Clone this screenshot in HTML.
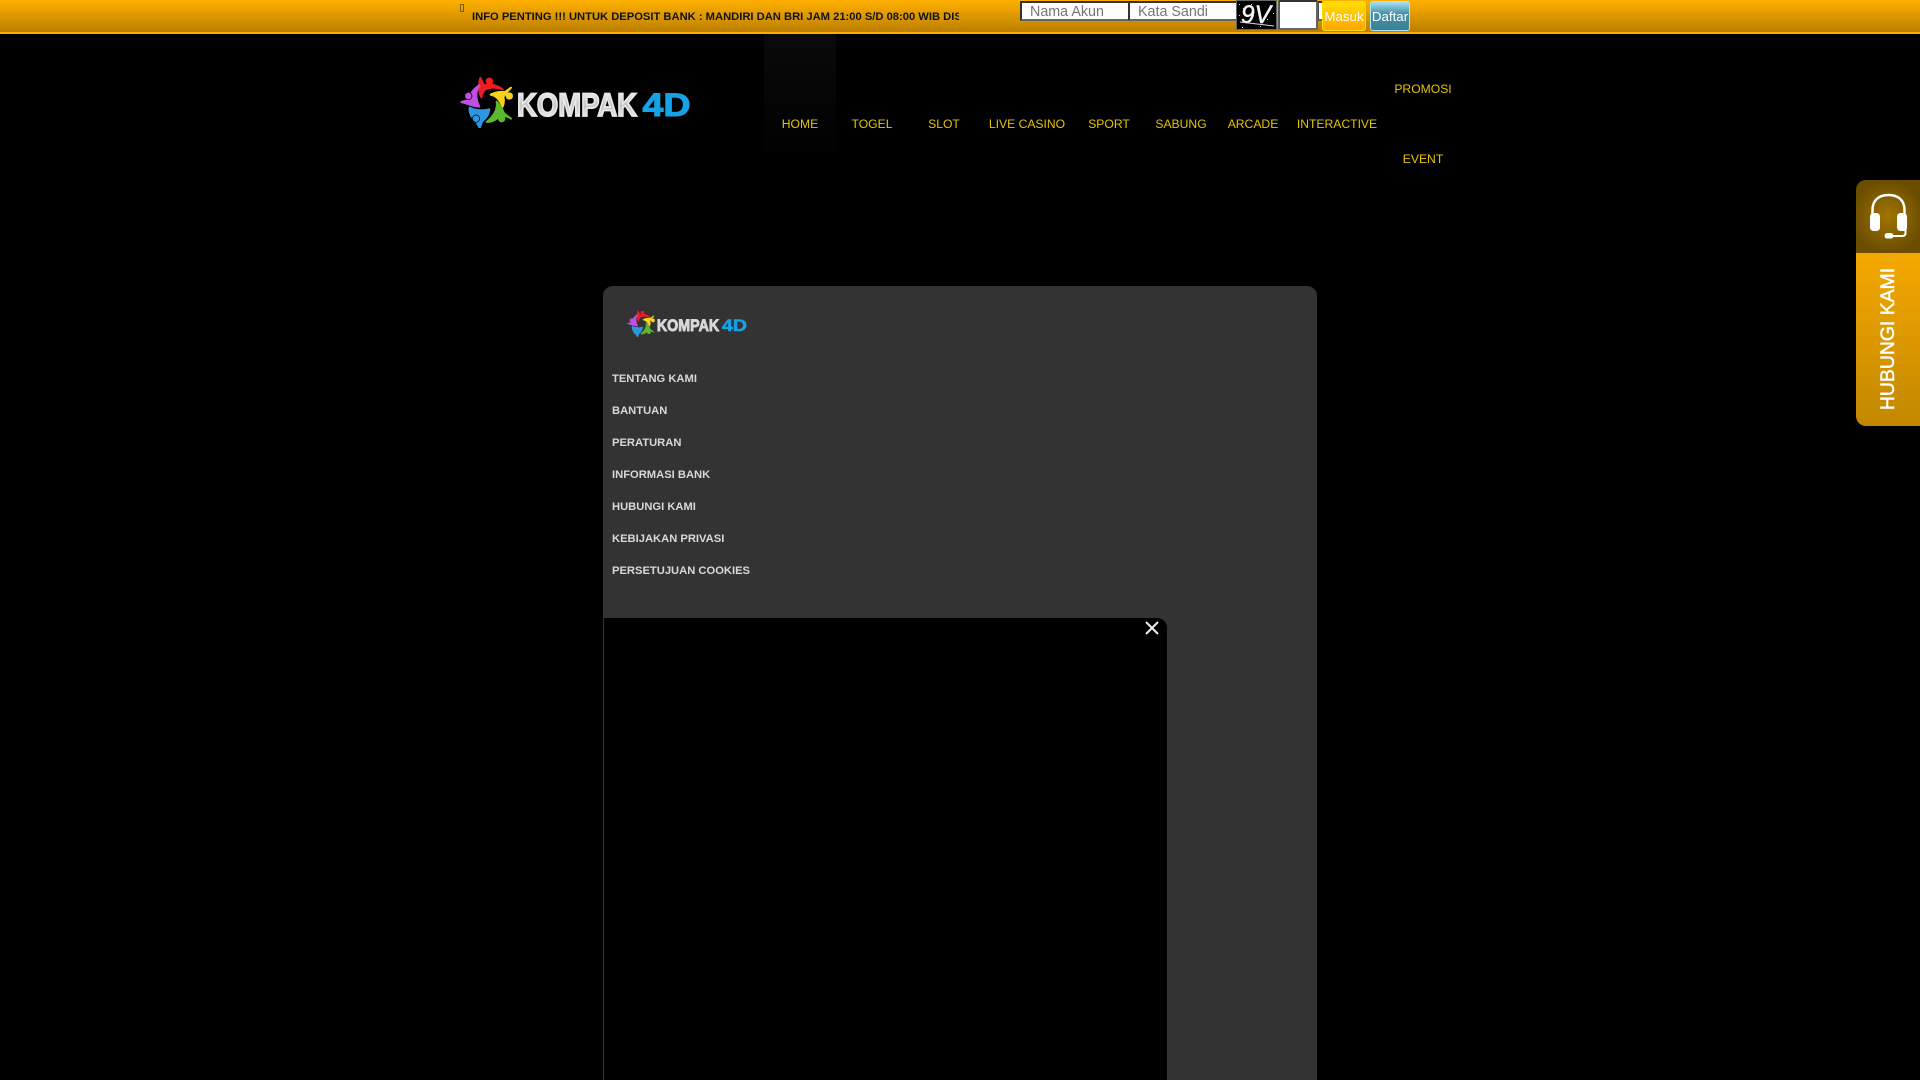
<!DOCTYPE html>
<html>
<head>
<meta charset="utf-8">
<title>KOMPAK4D</title>
<style>
html,body{margin:0;padding:0;background:#000;width:1920px;height:1080px;overflow:hidden;font-family:"Liberation Sans",sans-serif}
.a{position:absolute}
#top{left:0;top:0;width:1920px;height:32px;background:linear-gradient(#ffb000,#bb7f00);border-bottom:2px solid #ffae00}
#mq{left:472px;top:9px;width:487px;height:16px;overflow:hidden;white-space:nowrap;font:bold 11.2px/16px "Liberation Sans",sans-serif;color:#111}
.inp{background:#fff;box-sizing:border-box;border-top:2px solid #333;border-left:2px solid #333;border-right:1px solid #444;border-bottom:2px solid #666;color:#757575;font-size:14.3px;line-height:18px;height:20px;top:1px;padding-left:8px;white-space:nowrap;overflow:hidden}
.btn{top:1px;height:30px;box-sizing:border-box;border-radius:3px;color:#fff;font-size:13.33px;line-height:30px;text-align:center;white-space:nowrap;overflow:hidden}
.nav{color:#e6c400;font-size:12.15px;line-height:14px;transform:translateX(-50%);white-space:nowrap}
.m{left:612px;color:#d8d8d8;font:bold 11.2px/14px "Liberation Sans",sans-serif;white-space:nowrap}
</style>
</head>
<body>
<div class="a" id="top"></div>
<div class="a" style="left:460px;top:4px;width:2px;height:6px;border:1px solid #7d5a00"></div>
<div class="a" id="mq">INFO PENTING !!! UNTUK DEPOSIT BANK : MANDIRI DAN BRI JAM 21:00 S/D 08:00 WIB DISTURBANCE</div>

<div class="a inp" style="left:1020px;width:109px">Nama Akun</div>
<div class="a inp" style="left:1128px;width:109px">Kata Sandi</div>
<svg class="a" style="left:1236px;top:0" width="41" height="30" viewBox="0 0 41 30">
<rect x=".5" y=".5" width="40" height="29" fill="#000" stroke="#666"/>
<text x="5" y="23" font-family="Liberation Sans,sans-serif" font-style="italic" font-size="25" textLength="30" lengthAdjust="spacingAndGlyphs" fill="#f4f4f4" stroke="#f4f4f4" stroke-width=".5">9V</text>
<path d="M4 22L38 26" stroke="#ddd" fill="none"/>
<g fill="#ddd"><rect x="3" y="4" width="1" height="1"/><rect x="7" y="8" width="1" height="1"/><rect x="34" y="5" width="1" height="1"/><rect x="37" y="13" width="1" height="1"/><rect x="31" y="19" width="1" height="1"/><rect x="6" y="27" width="1" height="1"/><rect x="15" y="4" width="1" height="1"/><rect x="24" y="26" width="1" height="1"/><rect x="3" y="15" width="1" height="1"/></g>
</svg>
<div class="a" style="left:1278px;top:0;width:40px;height:30px;box-sizing:border-box;background:#fff;border:2px solid #666;border-top-color:#333;border-left-color:#555;border-radius:2px"></div>
<div class="a" style="left:1318px;top:1px;width:4px;height:20px;box-sizing:border-box;background:#fff;border-top:2px solid #333;border-bottom:2px solid #666;border-left:1px solid #444"></div>
<div class="a btn" style="left:1322px;width:44px;background:linear-gradient(#ffdd00,#ffa600);border:1px solid #ffe000">Masuk</div>
<div class="a btn" style="left:1370px;width:40px;background:linear-gradient(#a5e2f2 0,#4a93aa 40%,#3a7f96);border:1px solid #a5e6fa">Daftar</div>

<div class="a" style="left:764px;top:34px;width:72px;height:132px;background:linear-gradient(#0a0a0a,#000)"></div>

<svg class="a" style="left:460px;top:76px" width="230" height="52" viewBox="0 0 230 52">
<defs>
<linearGradient id="s1" x1="0" y1="0" x2="0" y2="1"><stop offset="0" stop-color="#fff"/><stop offset=".5" stop-color="#c4c4c4"/><stop offset="1" stop-color="#fff"/></linearGradient>
</defs>
<g transform="scale(.3333) translate(-30,-32)" stroke-width="6" stroke-linejoin="round">
<path fill="#ee1c25" stroke="#ee1c25" d="M91 38L102 60Q130 52 158 72Q130 62 106 72Q94 85 94 96Q82 70 91 38Z"/><circle cx="118" cy="48" r="11" fill="#ee1c25"/>
<path fill="#f6d21c" stroke="#f6d21c" d="M183 67L165 80Q140 78 122 88Q145 92 158 124Q164 110 160 95Q170 80 183 67Z"/><circle cx="178" cy="92" r="11" fill="#f6d21c"/>
<path fill="#5cb82e" stroke="#5cb82e" d="M183 160L162 144Q152 120 140 109Q145 142 110 170Q135 170 150 150Q168 150 183 160Z"/><circle cx="155" cy="160" r="11" fill="#5cb82e"/>
<path fill="#2e96e0" stroke="#2e96e0" d="M89 188Q82 172 64 152Q57 137 59 127Q85 140 118 132Q115 155 97 167Z"/><circle cx="78" cy="160" r="11" fill="#2e96e0" stroke="#000" stroke-width="2"/>
<path fill="#c04fe0" stroke="#c04fe0" d="M34 110L56 104Q62 76 88 60Q70 88 88 124Q68 122 54 116Z"/><circle cx="55" cy="92" r="11" fill="#c04fe0" stroke="#000" stroke-width="2"/>
</g>
<text x="57" y="40" font-family="Liberation Sans,sans-serif" font-weight="bold" font-size="32" textLength="120" lengthAdjust="spacingAndGlyphs" fill="url(#s1)" stroke="#e8e8e8" stroke-width="1.8">KOMPAK</text>
<text x="182.500" y="40" font-family="Liberation Sans,sans-serif" font-weight="bold" font-size="32" textLength="48" lengthAdjust="spacingAndGlyphs" fill="#15a3e6" stroke="#15a3e6" stroke-width="1">4D</text>
</svg>

<div class="a nav" style="left:800px;top:117px">HOME</div>
<div class="a nav" style="left:872px;top:117px">TOGEL</div>
<div class="a nav" style="left:944px;top:117px">SLOT</div>
<div class="a nav" style="left:1027px;top:117px">LIVE CASINO</div>
<div class="a nav" style="left:1109px;top:117px">SPORT</div>
<div class="a nav" style="left:1181px;top:117px">SABUNG</div>
<div class="a nav" style="left:1253px;top:117px">ARCADE</div>
<div class="a nav" style="left:1337px;top:117px">INTERACTIVE</div>
<div class="a nav" style="left:1423px;top:82px">PROMOSI</div>
<div class="a nav" style="left:1423px;top:152px">EVENT</div>

<div class="a" style="left:603px;top:286px;width:714px;height:794px;background:#333;border-radius:10px 10px 0 0"></div>

<svg class="a" style="left:627px;top:310px" width="120" height="27" viewBox="0 0 230 52">
<g transform="scale(.3333) translate(-30,-32)" stroke-width="6" stroke-linejoin="round">
<path fill="#ee1c25" stroke="#ee1c25" d="M91 38L102 60Q130 52 158 72Q130 62 106 72Q94 85 94 96Q82 70 91 38Z"/><circle cx="118" cy="48" r="11" fill="#ee1c25"/>
<path fill="#f6d21c" stroke="#f6d21c" d="M183 67L165 80Q140 78 122 88Q145 92 158 124Q164 110 160 95Q170 80 183 67Z"/><circle cx="178" cy="92" r="11" fill="#f6d21c"/>
<path fill="#5cb82e" stroke="#5cb82e" d="M183 160L162 144Q152 120 140 109Q145 142 110 170Q135 170 150 150Q168 150 183 160Z"/><circle cx="155" cy="160" r="11" fill="#5cb82e"/>
<path fill="#2e96e0" stroke="#2e96e0" d="M89 188Q82 172 64 152Q57 137 59 127Q85 140 118 132Q115 155 97 167Z"/><circle cx="78" cy="160" r="11" fill="#2e96e0"/>
<path fill="#c04fe0" stroke="#c04fe0" d="M34 110L56 104Q62 76 88 60Q70 88 88 124Q68 122 54 116Z"/><circle cx="55" cy="92" r="11" fill="#c04fe0"/>
</g>
<text x="57" y="40" font-family="Liberation Sans,sans-serif" font-weight="bold" font-size="32" textLength="120" lengthAdjust="spacingAndGlyphs" fill="#d8d8d8" stroke="#d8d8d8" stroke-width="1.8">KOMPAK</text>
<text x="182.500" y="40" font-family="Liberation Sans,sans-serif" font-weight="bold" font-size="32" textLength="48" lengthAdjust="spacingAndGlyphs" fill="#15a3e6" stroke="#15a3e6" stroke-width="1">4D</text>
</svg>

<div class="a m" style="top:372px">TENTANG KAMI</div>
<div class="a m" style="top:404px">BANTUAN</div>
<div class="a m" style="top:436px">PERATURAN</div>
<div class="a m" style="top:468px">INFORMASI BANK</div>
<div class="a m" style="top:500px">HUBUNGI KAMI</div>
<div class="a m" style="top:532px">KEBIJAKAN PRIVASI</div>
<div class="a m" style="top:564px">PERSETUJUAN COOKIES</div>

<div class="a" style="left:604px;top:618px;width:563px;height:462px;background:#000;border-radius:0 10px 0 0"></div>
<svg class="a" style="left:1144px;top:620px" width="16" height="16" viewBox="0 0 16 16"><path d="M2 2L14 14M14 2L2 14" stroke="#eee" stroke-width="2" fill="none"/></svg>

<div class="a" style="left:1856px;top:180px;width:64px;height:73px;border-radius:10px 0 0 0;background:radial-gradient(circle at 50% 50%,#a07500,#6b4d00 75%)"></div>
<div class="a" style="left:1856px;top:253px;width:64px;height:173px;border-radius:0 0 0 10px;background:linear-gradient(#f5a800,#c28800)"></div>
<svg class="a" style="left:1856px;top:180px" width="64" height="73" viewBox="0 0 64 73">
<g transform="translate(0,9)">
<path d="M16.500 26V21C16.500 11 23 6 32.500 6S48.500 11 48.500 21V26" fill="none" stroke="#fff" stroke-width="2.500"/>
<rect x="14" y="24" width="10" height="18" rx="3.500" fill="#fff"/>
<rect x="41" y="24" width="10" height="18" rx="3.500" fill="#fff"/>
<path d="M49.500 40V44Q49.500 47 46 47H36" fill="none" stroke="#fff" stroke-width="2"/>
<rect x="28.500" y="44" width="9" height="5.500" rx="2.700" fill="#fff"/>
</g>
</svg>
<div class="a" style="left:1888px;top:339px;width:0;height:0"><div style="position:absolute;left:-80px;top:-12px;width:160px;height:24px;line-height:24px;text-align:center;color:#fff;font-size:19.4px;-webkit-text-stroke:.5px #fff;transform:rotate(-90deg);white-space:nowrap">HUBUNGI KAMI</div></div>
</body>
</html>
